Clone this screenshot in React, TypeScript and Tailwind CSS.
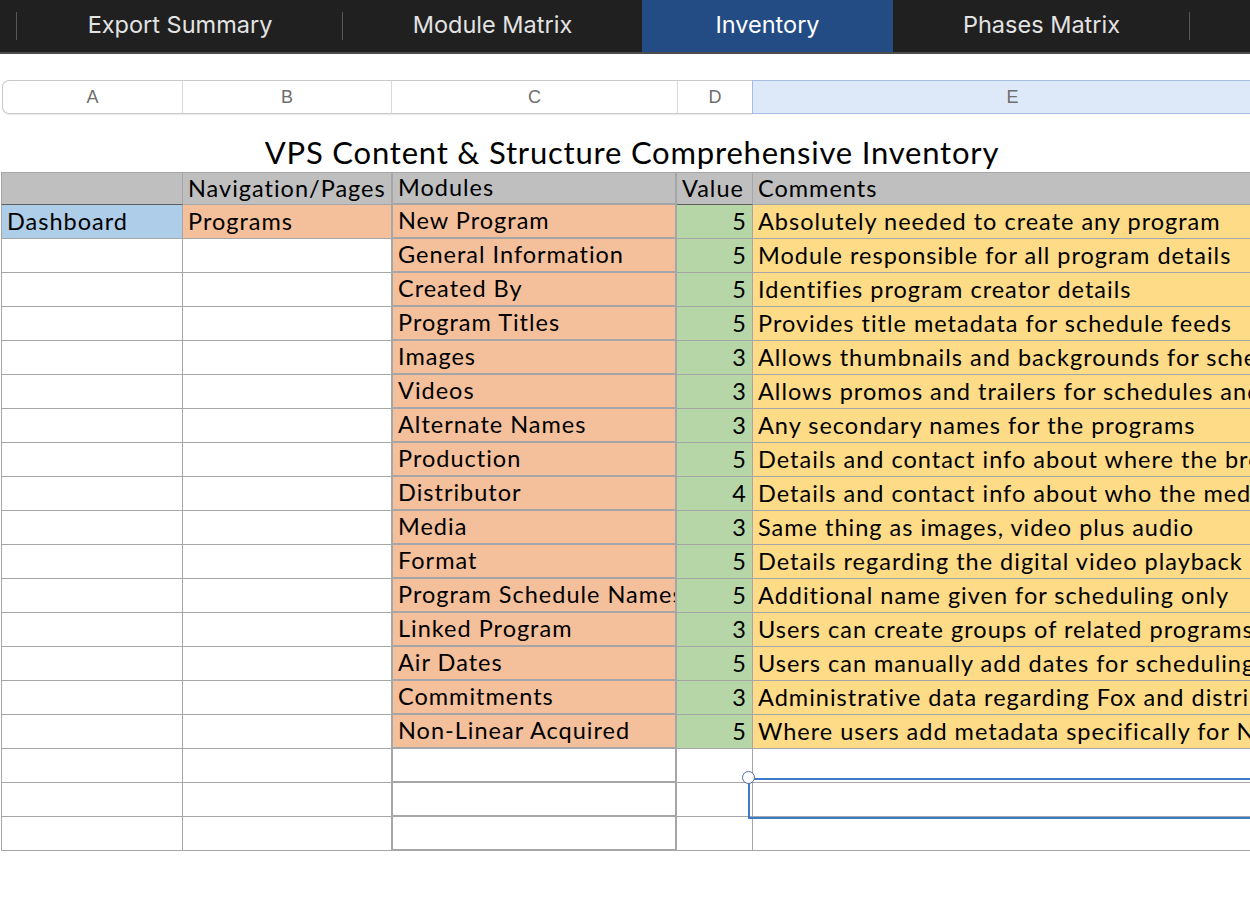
const tabs = [
  { label: "Export Summary", w: "w-[326px]", active: false, divider: true },
  { label: "Module Matrix", w: "w-[299px]", active: false, divider: false },
  { label: "Inventory", w: "w-[251px]", active: true, divider: false },
  { label: "Phases Matrix", w: "w-[297px]", active: false, divider: true },
];

const modules: [string, number, string][] = [
  ["New Program", 5, "Absolutely needed to create any program"],
  ["General Information", 5, "Module responsible for all program details"],
  ["Created By", 5, "Identifies program creator details"],
  ["Program Titles", 5, "Provides title metadata for schedule feeds"],
  ["Images", 3, "Allows thumbnails and backgrounds for schedules and apps"],
  ["Videos", 3, "Allows promos and trailers for schedules and apps"],
  ["Alternate Names", 3, "Any secondary names for the programs"],
  ["Production", 5, "Details and contact info about where the broadcast originates"],
  ["Distributor", 4, "Details and contact info about who the media is distributed by"],
  ["Media", 3, "Same thing as images, video plus audio"],
  ["Format", 5, "Details regarding the digital video playback format"],
  ["Program Schedule Names", 5, "Additional name given for scheduling only"],
  ["Linked Program", 3, "Users can create groups of related programs"],
  ["Air Dates", 5, "Users can manually add dates for scheduling"],
  ["Commitments", 3, "Administrative data regarding Fox and distributors"],
  ["Non-Linear Acquired", 5, "Where users add metadata specifically for Non-Linear"],
];

const cell = "h-full flex items-center px-[5px] whitespace-nowrap overflow-hidden";

function Row({
  a,
  b,
  c,
  d,
  e,
  filled,
  first,
}: {
  a?: string;
  b?: string;
  c?: string;
  d?: number;
  e?: string;
  filled: boolean;
  first?: boolean;
}) {
  return (
    <div className="flex h-[34px]">
      <div
        className={`${cell} w-[182px] shrink-0 border-l border-r border-b border-[#a6a6a6] ${
          first ? "bg-[#aecde9]" : ""
        }`}
      >
        {a}
      </div>
      <div
        className={`${cell} w-[208px] shrink-0 border-b border-[#a6a6a6] ${first ? "bg-[#f4bf9b]" : ""}`}
      >
        {b}
      </div>
      <div
        className={`${cell} w-[286px] shrink-0 border-l-2 border-r-2 border-b-2 border-[#a6a6a6] ${
          filled ? "bg-[#f4bf9b]" : ""
        }`}
      >
        {c}
      </div>
      <div
        className={`${cell} w-[76px] shrink-0 justify-end border-r border-b border-[#a6a6a6] ${
          filled ? "bg-[#b7d6a8]" : ""
        }`}
      >
        {d}
      </div>
      <div
        className={`${cell} w-[510px] shrink-0 border-r border-b border-[#a6a6a6] ${
          filled ? "bg-[#fedb87]" : ""
        }`}
      >
        {e}
      </div>
    </div>
  );
}

export default function App() {
  return (
    <div className="w-[1250px] h-[920px] overflow-hidden bg-white">
      {/* Sheet tabs */}
      <div className="flex h-[54px] bg-[#202020] border-b-2 border-[#4e4e4e] font-['Inter',sans-serif] text-[23.5px]">
        <div className="w-[17px] shrink-0 flex items-center">
          <div className="ml-auto w-px h-[28px] bg-[#575757]" />
        </div>
        {tabs.map((t) => (
          <div
            key={t.label}
            className={`${t.w} shrink-0 relative flex items-center justify-center pb-[3px] ${
              t.active ? "bg-[#234c85] text-white" : "text-[#e3e3e3]"
            }`}
          >
            {t.label}
            {t.divider && (
              <div className="absolute right-0 top-[12px] w-px h-[28px] bg-[#575757]" />
            )}
          </div>
        ))}
      </div>

      {/* Column letters */}
      <div className="mt-[26px] ml-[2px] flex h-[34px] font-['Liberation_Sans',sans-serif] text-[18px] text-[#6e6e6e]">
        <div className="w-[180px] shrink-0 flex items-center justify-center border border-r-0 border-[#c9c9c9] rounded-l-[7px] shadow-[0_1px_1px_rgba(0,0,0,0.08)]">
          A
        </div>
        <div className="w-[209px] shrink-0 flex items-center justify-center border-y border-l border-[#c9c9c9] border-l-[#dadada] shadow-[0_1px_1px_rgba(0,0,0,0.08)]">
          B
        </div>
        <div className="w-[286px] shrink-0 flex items-center justify-center border-y border-l border-[#c9c9c9] border-l-[#dadada] shadow-[0_1px_1px_rgba(0,0,0,0.08)]">
          C
        </div>
        <div className="w-[75px] shrink-0 flex items-center justify-center border-y border-l border-[#c9c9c9] border-l-[#dadada] shadow-[0_1px_1px_rgba(0,0,0,0.08)]">
          D
        </div>
        <div className="w-[520px] shrink-0 flex items-center justify-center border border-r-0 border-[#a6bfe0] bg-[#dde9f9]">
          E
        </div>
      </div>

      {/* Sheet */}
      <div className="relative ml-[1px] font-['Lato',sans-serif] text-[23.5px] tracking-[1px] text-black">
        <div className="h-[58px] w-[1262px] flex items-end justify-center text-[31px] tracking-[0.8px] leading-[38px] pb-[1px]">
          VPS Content &amp; Structure Comprehensive Inventory
        </div>
        <div className="flex h-[33px] bg-[#bfbfbf]">
          <div className={`${cell} w-[182px] shrink-0 border-l border-r border-t border-[#a6a6a6] border-b border-b-[#5f5f5f]`} />
          <div className={`${cell} w-[208px] shrink-0 border-t border-b border-[#a6a6a6]`}>Navigation/Pages</div>
          <div className={`${cell} w-[286px] shrink-0 border-l-2 border-r-2 border-t border-b-2 border-[#a6a6a6]`}>
            Modules
          </div>
          <div className={`${cell} w-[76px] shrink-0 border-r border-t border-[#a6a6a6] border-b border-b-[#5f5f5f]`}>
            Value
          </div>
          <div className={`${cell} w-[510px] shrink-0 border-r border-t border-b border-[#a6a6a6]`}>Comments</div>
        </div>
        {modules.map(([c, d, e], i) => (
          <Row
            key={c}
            a={i === 0 ? "Dashboard" : undefined}
            b={i === 0 ? "Programs" : undefined}
            c={c}
            d={d}
            e={e}
            filled
            first={i === 0}
          />
        ))}
        <Row filled={false} />
        <Row filled={false} />
        <Row filled={false} />

        {/* Selection */}
        <div className="absolute left-[747px] top-[664px] w-[520px] h-[41px] border-2 border-[#3b7bc9]" />
        <div className="absolute left-[741px] top-[657px] w-[13px] h-[13px] rounded-full bg-white border-[1.5px] border-[#4d6d9e]" />
      </div>
    </div>
  );
}
